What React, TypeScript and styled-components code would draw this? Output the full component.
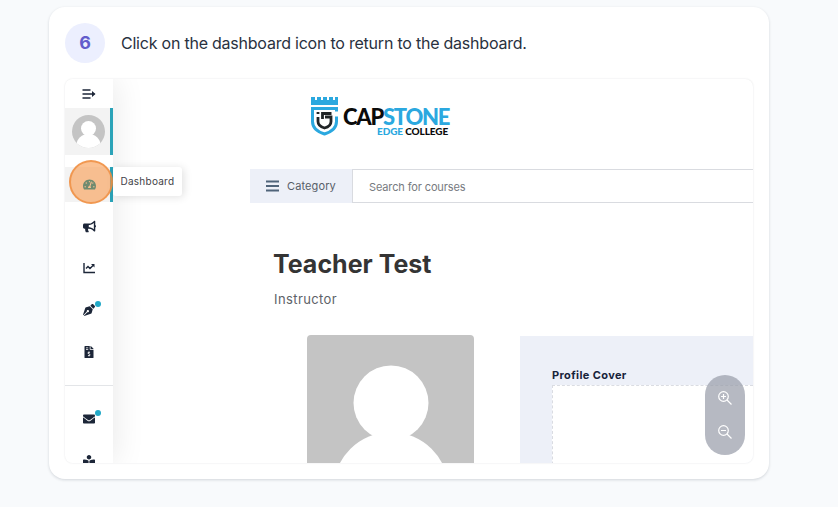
import React from 'react';
import styled, { createGlobalStyle } from 'styled-components';
import { FaBullhorn, FaPenNib, FaFileInvoiceDollar, FaEnvelope, FaBookReader, FaTachometerAlt } from 'react-icons/fa';

const GlobalStyle = createGlobalStyle`
  * {
    box-sizing: border-box;
  }
  body {
    margin: 0;
    height: 507px;
    overflow: hidden;
    background: #f8fafc;
    font-family: Inter, "Liberation Sans", sans-serif;
  }
`;

const Page = styled.main`
  padding: 7px 69px 28px 49px;
`;

const Card = styled.section`
  height: 472px;
  padding: 16px;
  border-radius: 16px;
  background: #ffffff;
  box-shadow: 0 1px 3px rgba(15, 23, 42, 0.16);
`;

const StepHeader = styled.header`
  display: flex;
  align-items: center;
  gap: 16px;
  height: 40px;
  margin-bottom: 16px;
`;

const StepNumber = styled.span`
  width: 40px;
  height: 40px;
  border-radius: 50%;
  background: #eceffe;
  color: #625ccb;
  font-size: 18px;
  font-weight: 700;
  line-height: 40px;
  text-align: center;
`;

const StepText = styled.p`
  margin: 0;
  color: #293140;
  font-size: 16px;
  line-height: 24px;
  letter-spacing: -0.225px;
  white-space: nowrap;
`;

const Shot = styled.div`
  position: relative;
  display: flex;
  height: 384px;
  border-radius: 8px;
  overflow: hidden;
  background: #ffffff;
  box-shadow: 0 0 2px rgba(15, 23, 42, 0.13);
`;

const Sidebar = styled.nav`
  position: relative;
  flex: none;
  width: 48px;
  color: #1c2638;
  background: #ffffff;
  box-shadow: 2px 0 32px rgba(0, 0, 0, 0.09);
`;

const NavRow = styled.div<{ $height: number; $gap?: number; $active?: boolean }>`
  display: flex;
  align-items: center;
  justify-content: center;
  height: ${(p) => p.$height}px;
  margin-bottom: ${(p) => p.$gap || 0}px;
  padding-left: ${(p) => (p.$active ? 2 : 0)}px;
  background: ${(p) => (p.$active ? '#f3f3f3' : 'transparent')};
  border-right: ${(p) => (p.$active ? '3px solid #2ba3b8' : '0')};
  font-size: 13px;

  svg {
    display: block;
  }
`;

const IconHolder = styled.span`
  position: relative;
`;

const Dot = styled.i`
  position: absolute;
  top: -3px;
  right: -6px;
  width: 6px;
  height: 6px;
  border-radius: 50%;
  background: #22a9c7;
`;

const Divider = styled.hr`
  height: 1px;
  margin: 0 0 12px;
  border: 0;
  background: #e3e5e8;
`;

const ClickMarker = styled.div`
  position: absolute;
  top: 81px;
  left: 4px;
  display: flex;
  align-items: center;
  justify-content: center;
  width: 44px;
  height: 44px;
  padding: 4px 3px 0 0;
  border: 2px solid rgba(238, 139, 60, 0.75);
  border-radius: 50%;
  background: rgba(248, 157, 82, 0.62);
  color: #6f8b70;
  font-size: 13px;
`;

const Tooltip = styled.div`
  position: absolute;
  top: 88px;
  left: 48px;
  width: 69px;
  height: 29px;
  padding-left: 7.500px;
  border-radius: 3px;
  background: #ffffff;
  box-shadow: 2px 1px 9px rgba(0, 0, 0, 0.12);
  color: #3f4248;
  font-size: 10px;
  line-height: 29px;
  letter-spacing: 0.25px;
`;

const Content = styled.div`
  flex: 1;
  min-width: 0;
`;

const Logo = styled.div`
  display: flex;
  align-items: flex-start;
  gap: 3px;
  height: 90px;
  padding: 17px 0 0 197px;
`;

const LogoText = styled.div`
  padding-top: 11px;
  color: #0b0b0b;
  font-family: Lato, sans-serif;
  font-weight: 900;
`;

const LogoName = styled.div`
  font-size: 22px;
  line-height: 20px;
  letter-spacing: -1.250px;
  white-space: nowrap;
`;

const LogoSub = styled.div`
  padding-left: 34px;
  font-size: 10px;
  line-height: 9px;
  letter-spacing: -0.1px;
  white-space: nowrap;
`;

const Blue = styled.span`
  color: #2ba8df;
`;

const SearchBar = styled.div`
  display: flex;
  height: 34px;
  margin-left: 137px;
  border: 1px solid #d9dbe0;
  border-width: 1px 0;
`;

const Category = styled.div`
  display: flex;
  align-items: center;
  gap: 8px;
  width: 103px;
  margin: -1px 0;
  padding-left: 16px;
  background: #edf0f8;
  border-right: 1px solid #d9dbe0;
  color: #575e68;
  font-size: 11px;
  letter-spacing: 0.12px;
`;

const SearchText = styled.span`
  padding-left: 16px;
  color: #777a80;
  font-size: 11px;
  line-height: 34px;
  letter-spacing: -0.13px;
`;

const Title = styled.h1`
  margin: 46px 0 0 160px;
  color: #343434;
  font-size: 25px;
  line-height: 30px;
  font-weight: 700;
  letter-spacing: 0;
`;

const Role = styled.p`
  margin: 11px 0 0 161px;
  color: #5d6268;
  font-size: 13px;
  line-height: 18px;
  letter-spacing: 0.4px;
`;

const ProfileRow = styled.div`
  display: flex;
  align-items: flex-start;
  gap: 46px;
  padding: 27px 0 0 194px;
`;

const Photo = styled.svg`
  flex: none;
  display: block;
  border-radius: 4px 4px 0 0;
`;

const CoverPanel = styled.div`
  flex: 1;
  height: 140px;
  margin-top: 1px;
  padding: 31px 0 0 32px;
  background: #edf0f8;
`;

const CoverTitle = styled.h2`
  margin: 0 0 1px;
  color: #17233a;
  font-size: 11px;
  line-height: 17px;
  font-weight: 700;
  letter-spacing: 0.38px;
`;

const CoverBox = styled.div`
  height: 100px;
  border: 1px dashed #dadce2;
  border-right: 0;
  background: #ffffff;
`;

const ZoomControls = styled.div`
  position: absolute;
  right: 8px;
  bottom: 8px;
  display: flex;
  flex-direction: column;
  align-items: center;
  justify-content: center;
  gap: 20px;
  width: 40px;
  height: 80px;
  border-radius: 20px;
  background: rgba(151, 155, 168, 0.7);
  color: #ffffff;
`;

const ToggleIcon = () => (
  <svg width="14" height="12" viewBox="0 0 14 12" fill="none" stroke="currentColor" strokeWidth="1.5">
    <path d="M.5 2h8M.5 6h12M.5 10h8" />
    <path d="M10 3 13.500 6 10 9Z" fill="currentColor" stroke="none" />
  </svg>
);

const ChartIcon = () => (
  <svg width="13" height="12" viewBox="0 0 13 12" fill="none" stroke="currentColor" strokeWidth="1.4">
    <path d="M1 1v9.5h11" />
    <path d="m3 6.5 2-2 2 2 3-3" />
    <path d="M8 2h3.5v3.5Z" fill="currentColor" stroke="none" />
  </svg>
);

const MenuIcon = () => (
  <svg width="13" height="12" viewBox="0 0 13 12" stroke="#50647a" strokeWidth="1.8">
    <path d="M0 1.5h13M0 6h13M0 10.5h13" />
  </svg>
);

const ZoomIcon = ({ plus }: { plus?: boolean }) => (
  <svg width="14" height="14" viewBox="0 0 14 14" fill="none" stroke="currentColor" strokeWidth="1.2">
    <circle cx="5.500" cy="5.500" r="4.800" />
    <path d="m9 9 4.500 4.500M3 5.500h5" />
    {plus && <path d="M5.500 3v5" />}
  </svg>
);

const Shield = () => (
  <svg width="30" height="41" viewBox="0 0 30 41" fill="none">
    <path d="M1 1h4v3h2V1h4v3h2V1h4v3h2V1h4v3h2V1h3v8H1Z" fill="#2ba8df" />
    <path d="M26.500 15.500V12.500H2.500v13c0 7 5.500 10.500 12 12.500 6.500-2 12-5.500 12-12.500v-5" stroke="#2ba8df" strokeWidth="3" />
    <path d="M8 16v2m0 3v4.500c0 3.500 3 5.500 6.500 6.500 4-1 6.500-3 6.500-6.500v-4.500h-6M12.500 23v-5.500h9" stroke="#202426" strokeWidth="2.800" />
  </svg>
);

const UserAvatar = () => (
  <svg width="33" height="33" viewBox="0 0 33 33">
    <defs>
      <clipPath id="avatar">
        <circle cx="16.5" cy="16.5" r="16.5" />
      </clipPath>
    </defs>
    <g clipPath="url(#avatar)">
      <path d="M0 0h33v33H0Z" fill="#c4c4c4" />
      <circle cx="16.5" cy="13.5" r="7.5" fill="#fff" />
      <ellipse cx="16.5" cy="30" rx="12" ry="11" fill="#fff" />
    </g>
  </svg>
);

const App = () => {
  return (
    <>
      <GlobalStyle />
      <Page>
        <Card>
          <StepHeader>
            <StepNumber>6</StepNumber>
            <StepText>Click on the dashboard icon to return to the dashboard.</StepText>
          </StepHeader>
          <Shot>
            <Sidebar>
              <NavRow $height={29}><ToggleIcon /></NavRow>
              <NavRow $height={47} $gap={12} $active><UserAvatar /></NavRow>
              <NavRow $height={35} $gap={3} $active />
              <NavRow $height={42}><FaBullhorn /></NavRow>
              <NavRow $height={42}><ChartIcon /></NavRow>
              <NavRow $height={42}>
                <IconHolder><FaPenNib size={12} /><Dot /></IconHolder>
              </NavRow>
              <NavRow $height={42} $gap={12}><FaFileInvoiceDollar size={12} /></NavRow>
              <Divider />
              <NavRow $height={42}>
                <IconHolder><FaEnvelope size={12} /><Dot /></IconHolder>
              </NavRow>
              <NavRow $height={42}><FaBookReader size={12} /></NavRow>
            </Sidebar>
            <Content>
              <Logo>
                <Shield />
                <LogoText>
                  <LogoName>CAP<Blue>STONE</Blue></LogoName>
                  <LogoSub><Blue>EDGE</Blue> COLLEGE</LogoSub>
                </LogoText>
              </Logo>
              <SearchBar>
                <Category><MenuIcon />Category</Category>
                <SearchText>Search for courses</SearchText>
              </SearchBar>
              <Title>Teacher Test</Title>
              <Role>Instructor</Role>
              <ProfileRow>
                <Photo width="167" height="130" viewBox="0 0 167 130">
                  <path d="M0 0h167v130H0Z" fill="#c4c4c4" />
                  <circle cx="84" cy="68" r="37.5" fill="#fff" />
                  <circle cx="84" cy="154.7" r="57.6" fill="#fff" />
                </Photo>
                <CoverPanel>
                  <CoverTitle>Profile Cover</CoverTitle>
                  <CoverBox />
                </CoverPanel>
              </ProfileRow>
            </Content>
            <Tooltip>Dashboard</Tooltip>
            <ClickMarker><FaTachometerAlt /></ClickMarker>
            <ZoomControls>
              <ZoomIcon plus />
              <ZoomIcon />
            </ZoomControls>
          </Shot>
        </Card>
      </Page>
    </>
  );
};

export default App;
